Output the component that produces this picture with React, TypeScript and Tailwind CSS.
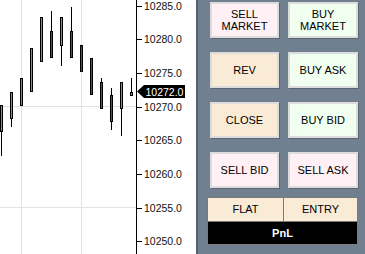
import React from "react";

type Candle = { x: number; hi: number; top: number; bot: number; lo: number; up: boolean };

const candles: Candle[] = [
  { x: 1, hi: 105, top: 105, bot: 132, lo: 156, up: true },
  { x: 11, hi: 92, top: 92, bot: 119, lo: 127, up: true },
  { x: 21, hi: 78, top: 78, bot: 106, lo: 106, up: true },
  { x: 31, hi: 48, top: 48, bot: 92, lo: 92, up: true },
  { x: 41, hi: 17, top: 17, bot: 62, lo: 62, up: true },
  { x: 51, hi: 11, top: 31, bot: 58, lo: 58, up: false },
  { x: 61, hi: 17, top: 17, bot: 46, lo: 66, up: true },
  { x: 71, hi: 7, top: 31, bot: 58, lo: 58, up: false },
  { x: 81, hi: 45, top: 45, bot: 72, lo: 72, up: false },
  { x: 91, hi: 58, top: 58, bot: 95, lo: 95, up: false },
  { x: 101, hi: 78, top: 82, bot: 109, lo: 109, up: false },
  { x: 111, hi: 88, top: 95, bot: 122, lo: 130, up: false },
  { x: 121, hi: 82, top: 82, bot: 109, lo: 136, up: true },
  { x: 131, hi: 78, top: 92, bot: 96, lo: 96, up: true },
];

const prices = [10285, 10280, 10275, 10270, 10265, 10260, 10255, 10250];
const py = (p: number) => 5.7 + (10285 - p) * 6.73;

function Chart() {
  return (
    <svg width="196" height="254" className="block" style={{ fontFamily: "'Liberation Sans', Arial, sans-serif" }}>
      <rect width="196" height="254" fill="#fff" />
      {/* grid */}
      <rect x="21" y="0" width="1" height="254" fill="#e2e2e2" />
      <rect x="81" y="0" width="1" height="254" fill="#e2e2e2" />
      <rect x="0" y="106" width="136" height="1" fill="#e2e2e2" />
      <rect x="0" y="207" width="136" height="1" fill="#e2e2e2" />
      {candles.map((c, i) => (
        <g key={i}>
          <rect x={c.x} y={c.hi} width="1" height={c.lo - c.hi} fill="#000" />
          <rect x={c.x - 1} y={c.top} width="3" height={c.bot - c.top} fill="#000" />
          {c.bot - c.top > 2 && (
            <rect x={c.x} y={c.top + 1} width="1" height={c.bot - c.top - 2} fill={c.up ? "#1fd61f" : "#e01818"} />
          )}
        </g>
      ))}
      {/* axis */}
      <rect x="136" y="0" width="1" height="254" fill="#000" />
      {prices.map((p) => (
        <g key={p}>
          <rect x="137" y={Math.round(py(p))} width="5" height="1" fill="#000" />
          <text x="144" y={py(p) + 4} fontSize="10.5" fill="#111">
            {p.toFixed(1)}
          </text>
        </g>
      ))}
      {/* last price tag */}
      <polygon points="137,91.5 144,85 185,85 185,98 144,98" fill="#000" />
      <text x="145.5" y="95.5" fontSize="10.5" fill="#fff">
        10272.0
      </text>
    </svg>
  );
}

function Btn({ lines, bg }: { lines: string[]; bg: string }) {
  return (
    <div
      className={`h-[36px] border-2 border-[#dcdcdc] shadow-[1px_1px_0_#5c6672] flex flex-col items-center justify-center text-[11px] leading-[12px] text-black ${bg}`}
    >
      {lines.map((l) => (
        <span key={l}>{l}</span>
      ))}
    </div>
  );
}

export default function App() {
  return (
    <div
      className="w-[365px] h-[254px] flex overflow-hidden bg-white"
      style={{ fontFamily: "'Liberation Sans', Arial, sans-serif" }}
    >
      <Chart />
      <div className="flex-1 h-full bg-[#708090] border-l-2 border-[#55606b] pt-[2px]">
        <div className="pl-[12px] grid grid-cols-[69px_70px] gap-x-[9px] gap-y-[14px]">
          <Btn lines={["SELL", "MARKET"]} bg="bg-[#fff0f5]" />
          <Btn lines={["BUY", "MARKET"]} bg="bg-[#f0fff0]" />
          <Btn lines={["REV"]} bg="bg-[#faebd7]" />
          <Btn lines={["BUY ASK"]} bg="bg-[#f0fff0]" />
          <Btn lines={["CLOSE"]} bg="bg-[#faebd7]" />
          <Btn lines={["BUY BID"]} bg="bg-[#f0fff0]" />
          <Btn lines={["SELL BID"]} bg="bg-[#fff0f5]" />
          <Btn lines={["SELL ASK"]} bg="bg-[#fff0f5]" />
        </div>
        <div className="ml-[9px] mt-[9px] w-[151px] border border-[#7a7a7a] text-[11px]">
          <div className="flex h-[23px] bg-[#faebd7] text-black">
            <div className="w-[76px] flex items-center justify-center border-r border-[#7a7a7a]">FLAT</div>
            <div className="flex-1 flex items-center justify-center">ENTRY</div>
          </div>
          <div className="h-[23px] bg-black border-t border-[#7a7a7a] text-white font-bold flex items-center justify-center">
            PnL
          </div>
        </div>
      </div>
    </div>
  );
}
